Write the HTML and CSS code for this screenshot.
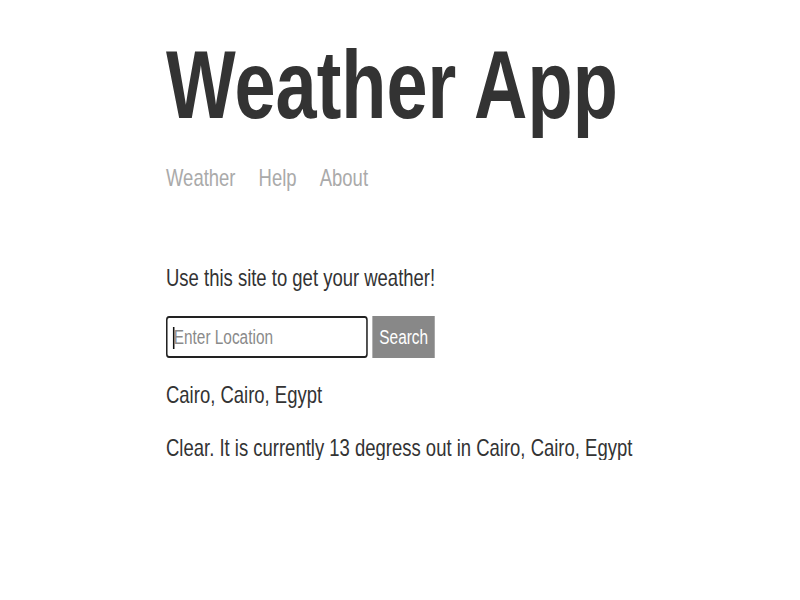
FILE: index.html
```html
<!DOCTYPE html>
<html lang="en">
<head>
<meta charset="utf-8">
<title>Weather App</title>
<link rel="stylesheet" href="styles.css">
</head>
<body>
<div class="page">
  <header class="header">
    <h1 class="title">Weather App</h1>
    <nav class="nav">
      <a class="nav-link" href="#">Weather</a>
      <a class="nav-link" href="#">Help</a>
      <a class="nav-link" href="#">About</a>
    </nav>
  </header>
  <main class="main">
    <p class="intro">Use this site to get your weather!</p>
    <form class="search-form">
      <div class="field">
        <input class="location-input" type="text" placeholder="Enter Location">
        <span class="caret"></span>
      </div>
      <button class="search-btn" type="button">Search</button>
    </form>
    <p class="location">Cairo, Cairo, Egypt</p>
    <p class="forecast">Clear. It is currently 13 degress out in Cairo, Cairo, Egypt</p>
  </main>
</div>
</body>
</html>
```
FILE: styles.css
```css
html, body {
  margin: 0;
  padding: 0;
  background: #ffffff;
  overflow: hidden;
}
body {
  font-family: "Liberation Sans", Arial, sans-serif;
  color: #333333;
}
.page {
  width: 760px;
  box-sizing: border-box;
  padding: 36px 0 0 0;
  transform: translateX(166px) scaleX(0.77);
  transform-origin: 0 0;
}
.header {
  display: flex;
  flex-direction: column;
}
.title {
  margin: 0;
  font-size: 96px;
  line-height: 97px;
  font-weight: 700;
  color: #333333;
}
.nav {
  display: flex;
  gap: 30px;
  margin-top: 33px;
}
.nav-link {
  font-size: 24px;
  line-height: 24px;
  color: #aaaaaa;
  text-decoration: none;
}
.main {
  display: flex;
  flex-direction: column;
  align-items: flex-start;
}
.intro {
  margin: 76px 0 0;
  font-size: 24px;
  line-height: 24px;
}
.search-form {
  display: flex;
  gap: 6px;
  margin-top: 26px;
}
.field {
  position: relative;
}
.location-input {
  box-sizing: border-box;
  width: 262px;
  height: 42px;
  margin: 0;
  padding: 0 8px;
  border: 2px solid #222222;
  border-radius: 4px;
  font-family: "Liberation Sans", Arial, sans-serif;
  font-size: 20px;
  color: #333333;
  outline: none;
}
.location-input::placeholder {
  color: #8a8a8a;
}
.caret {
  position: absolute;
  left: 9px;
  top: 11px;
  width: 2px;
  height: 22px;
  background: #111111;
}
.search-btn {
  box-sizing: border-box;
  height: 42px;
  margin: 0;
  padding: 0 9px;
  border: none;
  background: #888888;
  color: #ffffff;
  font-family: "Liberation Sans", Arial, sans-serif;
  font-size: 20px;
}
.location {
  margin: 25px 0 0;
  font-size: 24px;
  line-height: 24px;
}
.forecast {
  margin: 29px 0 0;
  font-size: 24px;
  line-height: 24px;
}
```
